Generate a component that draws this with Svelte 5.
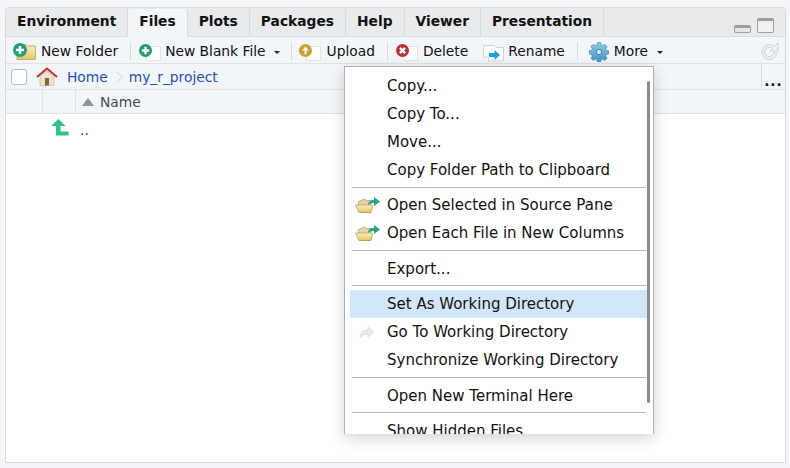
<script>
  const tabs = ["Environment", "Files", "Plots", "Packages", "Help", "Viewer", "Presentation"];

  // null = separator
  const menu = [
    { label: "Copy..." },
    { label: "Copy To..." },
    { label: "Move..." },
    { label: "Copy Folder Path to Clipboard" },
    null,
    { label: "Open Selected in Source Pane", icon: "open" },
    { label: "Open Each File in New Columns", icon: "open" },
    null,
    { label: "Export..." },
    null,
    { label: "Set As Working Directory", active: true },
    { label: "Go To Working Directory", icon: "goto" },
    { label: "Synchronize Working Directory" },
    null,
    { label: "Open New Terminal Here" },
    null,
    { label: "Show Hidden Files" },
  ];
</script>

{#snippet badge(color, kind)}
  <svg class="badge" width="13" height="13" viewBox="0 0 14 14">
    <circle cx="7" cy="7" r="7" fill={color} />
    {#if kind === "plus"}
      <path d="M7 3v8M3 7h8" stroke="#fff" stroke-width="2.600" />
    {:else if kind === "x"}
      <path d="M4.200 4.200l5.600 5.600M9.800 4.200l-5.600 5.600" stroke="#fff" stroke-width="2.400" />
    {:else}
      <path d="M7 2.800L3.500 7H6v4h2V7h2.500z" fill="#fff" />
    {/if}
  </svg>
{/snippet}

{#snippet openFolder()}
  <svg width="26" height="18" viewBox="0 0 26 18">
    <defs>
      <linearGradient id="fold" x1="0" y1="0" x2="0" y2="1">
        <stop offset="0" stop-color="#f8ecc0" />
        <stop offset="1" stop-color="#e5c766" />
      </linearGradient>
    </defs>
    <path d="M3 6l6-3 2 1.500h5V16.500H5z" fill="#e2d5a6" stroke="#a89a6a" stroke-width=".7" />
    <path d="M.5 9h16L18 10 15.500 16.500H4z" fill="url(#fold)" stroke="#b19b58" stroke-width=".7" />
    <path d="M13 9c0-3.500 2.500-5 6-5V1l6 4.500-6 4.500V7c-2.500 0-4.500.5-6 2z" fill="#22a77f" />
  </svg>
{/snippet}

<div class="page">
  <div class="pane">
    <div class="tabstrip">
      {#each tabs as tab}
        <div class="tab" class:selected={tab === "Files"}>{tab}</div>
      {/each}
      <div class="winbtns">
        <span class="minimize"></span>
        <span class="maximize"></span>
      </div>
    </div>

    <div class="toolbar">
      <div class="tool newfolder">
        <svg class="folder" width="24" height="18" viewBox="0 0 24 18">
          <defs>
            <linearGradient id="nf" x1="0" y1="0" x2="0" y2="1">
              <stop offset="0" stop-color="#fbf0c4" />
              <stop offset="1" stop-color="#e9c75f" />
            </linearGradient>
          </defs>
          <path d="M8 1.500h5l1.500 1.500h8V16.500H4V6z" fill="url(#nf)" stroke="#b9a15a" stroke-width=".8" />
          <circle cx="7" cy="7" r="7" fill="#1fa078" />
          <path d="M7 3v8M3 7h8" stroke="#fff" stroke-width="2.600" />
        </svg>
        New Folder
      </div>
      <i class="sep"></i>
      <div class="tool blank">
        <span class="stack"><span class="sheet"></span>{@render badge("#1f9d63", "plus")}</span>
        New Blank File
        <span class="caret"></span>
      </div>
      <i class="sep"></i>
      <div class="tool upload">
        <span class="stack"><span class="sheet"></span>{@render badge("#c9a227", "up")}</span>
        Upload
      </div>
      <i class="sep"></i>
      <div class="tool delete">
        <span class="stack"><span class="sheet"></span>{@render badge("#b8322f", "x")}</span>
        Delete
      </div>
      <div class="tool rename">
        <svg width="21" height="18" viewBox="0 0 21 18">
          <path d="M.5 1.500h11l1.500 2h7.500v13.500H5.500V13H.5z" fill="#fff" stroke="#c4c9d0" stroke-width=".8" />
          <path d="M6 9h5.500V6l5.500 5-5.500 5v-3H6z" fill="#1a9fe8" />
        </svg>
        Rename
      </div>
      <i class="sep"></i>
      <div class="tool more">
        <svg width="20" height="20" viewBox="0 0 20 20">
          <defs>
            <linearGradient id="gear" x1="0" y1="0" x2="0" y2="1">
              <stop offset="0" stop-color="#8fcbe6" />
              <stop offset="1" stop-color="#3f94c4" />
            </linearGradient>
          </defs>
          <path
            d="M8.400.5h3.200l.5 2.500 1.600.7 2.100-1.400 2.300 2.300-1.400 2.100.7 1.600 2.500.5v3.200l-2.500.5-.7 1.600 1.400 2.100-2.300 2.300-2.100-1.400-1.600.7-.5 2.500H8.400l-.5-2.500-1.600-.7-2.100 1.400-2.300-2.300 1.400-2.100-.7-1.600-2.500-.5V8.800l2.500-.5.7-1.600-1.400-2.100 2.300-2.300 2.100 1.400 1.600-.7z"
            fill="url(#gear)"
            stroke="#3a7ea6"
            stroke-width=".6"
          />
          <circle cx="10" cy="10" r="2.600" fill="#dcebf3" stroke="#3a7ea6" />
        </svg>
        More
        <span class="caret"></span>
      </div>
      <svg class="refresh" width="19" height="20" viewBox="0 0 19 20">
        <path
          d="M14.500 5.500A7.500 7.500 0 1 0 16.800 12h-3a4.700 4.700 0 1 1-1.300-4.500L10 10h8V2z"
          fill="#eef2f6"
          stroke="#c6d0dc"
        />
      </svg>
    </div>

    <div class="pathbar">
      <span class="checkbox"></span>
      <svg class="home" width="22" height="20" viewBox="0 0 22 20">
        <path d="M4 9.500v9h14v-9L11 3.500z" fill="#e9e3d6" stroke="#b9b3a6" stroke-width=".6" />
        <rect x="9" y="11" width="4" height="7.500" fill="#9a5a2a" />
        <path d="M1 10L11 1.500 21 10" fill="none" stroke="#c9302a" stroke-width="2" />
      </svg>
      <a class="crumb" href="#home">Home</a>
      <svg class="chevron" width="9" height="14" viewBox="0 0 9 14">
        <path d="M1 1.500L7.500 7 1 12.500" fill="none" stroke="#d5d8dc" />
      </svg>
      <a class="crumb" href="#project">my_r_project</a>
      <div class="overflow">...</div>
    </div>

    <div class="colhead">
      <div class="col c1"></div>
      <div class="col c2"></div>
      <div class="col c3"><span class="sort"></span>Name</div>
    </div>

    <div class="listing">
      <div class="row">
        <svg class="up" width="18" height="17" viewBox="0 0 18 17">
          <path d="M7.500 0L0 7h5v9.500h12.500v-4H9.500V7h5z" fill="#2fc483" />
        </svg>
        <a class="parent" href="#up">..</a>
      </div>
    </div>
  </div>

  <div class="menu">
    <div class="scrollthumb"></div>
    {#each menu as item}
      {#if item === null}
        <div class="divider"></div>
      {:else}
        <div class="item" class:active={item.active}>
          <span class="itemicon">
            {#if item.icon === "open"}
              {@render openFolder()}
            {:else if item.icon === "goto"}
              <svg class="goto" width="16" height="13" viewBox="0 0 16 13">
                <path d="M1 12c0-5 3-7.500 8-7.500V1l6 5-6 5V8C5.500 8 3 9 1 12z" fill="#e8ecf2" stroke="#cfd6e2" stroke-width=".7" />
              </svg>
            {/if}
          </span>
          {item.label}
        </div>
      {/if}
    {/each}
  </div>
</div>

<style>
  :global(body) {
    margin: 0;
    background: #f3f5f8;
  }

  .page {
    position: relative;
    width: 790px;
    height: 468px;
    overflow: hidden;
    padding: 7px 4px 5px 5px;
    box-sizing: border-box;
    font-family: "DejaVu Sans", sans-serif;
    font-size: 13.8px;
    color: #111;
  }

  .pane {
    height: 100%;
    box-sizing: border-box;
    display: flex;
    flex-direction: column;
    border: 1px solid #d6d9dd;
    border-radius: 4px 4px 0 0;
    background: #fff;
  }

  .tabstrip {
    display: flex;
    align-items: flex-end;
    height: 29px;
    flex: none;
    box-sizing: border-box;
    background: #e8eaec;
    border-bottom: 1px solid #d6d9dd;
    border-radius: 4px 4px 0 0;
  }

  .tab {
    height: 28px;
    box-sizing: border-box;
    padding: 4px 11px 0;
    font-weight: 700;
    line-height: 16px;
    color: #111;
    border-right: 1px solid #d6d9dd;
    margin-bottom: -1px;
    border-bottom: 1px solid #d6d9dd;
    white-space: nowrap;
  }

  .tab.selected {
    background: #f3f6f8;
    border-bottom-color: #f3f6f8;
    border-left: 1px solid #d6d9dd;
    margin-left: -1px;
    border-radius: 3px 3px 0 0;
  }

  .winbtns {
    margin-left: auto;
    display: flex;
    align-items: flex-end;
    gap: 6px;
    padding: 0 11px 3px 0;
  }

  .minimize {
    width: 17px;
    height: 8px;
    box-sizing: border-box;
    background: #e3e5e7;
    border: 1px solid #9b9fa4;
    border-top-width: 3px;
    border-radius: 2px;
  }

  .maximize {
    width: 17px;
    height: 15px;
    box-sizing: border-box;
    background: #eef0f2;
    border: 1px solid #9b9fa4;
    border-top-width: 3px;
    border-radius: 2px;
  }

  .toolbar {
    display: flex;
    align-items: center;
    height: 27px;
    flex: none;
    box-sizing: border-box;
    background: #f3f6f8;
    border-bottom: 1px solid #dfe2e5;
    padding: 2px 0 0 7px;
  }

  .tool {
    display: flex;
    align-items: center;
    white-space: nowrap;
  }

  .newfolder {
    gap: 4px;
    margin-right: 12px;
  }

  .newfolder svg {
    margin-top: 1px;
  }

  .blank {
    gap: 4px;
    margin: 0 11px 0 8px;
  }

  .upload {
    gap: 6px;
    margin: 0 12px 0 7px;
  }

  .delete {
    gap: 5px;
    margin-left: 8px;
  }

  .rename {
    gap: 4px;
    margin: 0 12px 0 15px;
  }

  .rename svg {
    margin-top: 3px;
  }

  .more {
    gap: 5px;
    margin-left: 11px;
  }

  .more svg {
    margin-top: 2px;
  }

  .stack {
    position: relative;
    width: 22px;
    height: 17px;
    margin-top: 3px;
    display: block;
  }

  .sheet {
    position: absolute;
    right: 0;
    bottom: 0;
    width: 15px;
    height: 15px;
    background: #fff;
    border: 1px solid #dfe2e6;
    box-sizing: border-box;
  }

  .badge {
    position: absolute;
    left: 0;
    top: 0;
  }

  .sep {
    width: 1px;
    height: 18px;
    background: #d6d9dd;
  }

  .caret {
    width: 0;
    height: 0;
    margin-left: 4px;
    margin-top: 3px;
    border-left: 3.500px solid transparent;
    border-right: 3.500px solid transparent;
    border-top: 3.500px solid #222;
  }

  .refresh {
    margin-left: auto;
    margin-right: 6px;
  }

  .pathbar {
    display: flex;
    align-items: center;
    height: 26px;
    flex: none;
    box-sizing: border-box;
    background: #f3f6f8;
    border-bottom: 1px solid #dfe2e5;
    padding-left: 5px;
  }

  .checkbox {
    width: 16px;
    height: 16px;
    box-sizing: border-box;
    background: #fff;
    border: 1px solid #b5b8bc;
    border-radius: 3px;
    margin-right: 9px;
  }

  .home {
    margin-right: 9px;
  }

  .crumb {
    color: #1c4fc4;
    text-decoration: none;
  }

  .chevron {
    margin: 0 5px 0 7px;
  }

  .overflow {
    margin-left: auto;
    width: 24px;
    height: 100%;
    box-sizing: border-box;
    border-left: 1px solid #d6d9dd;
    text-align: center;
    font-weight: 700;
    letter-spacing: 1px;
    line-height: 34px;
  }

  .colhead {
    display: flex;
    height: 24px;
    flex: none;
    box-sizing: border-box;
    background: #f3f6f8;
    border-bottom: 1px solid #dfe2e5;
    color: #444b55;
  }

  .col {
    box-sizing: border-box;
    border-right: 1px solid #dfe2e5;
    display: flex;
    align-items: center;
  }

  .c1 {
    width: 37px;
  }

  .c2 {
    width: 33px;
  }

  .c3 {
    border-right: none;
    padding-left: 6px;
    gap: 6px;
  }

  .sort {
    width: 0;
    height: 0;
    border-left: 6px solid transparent;
    border-right: 6px solid transparent;
    border-bottom: 8px solid #8a8f9a;
  }

  .listing {
    flex: 1;
  }

  .row {
    display: flex;
    align-items: center;
    height: 27px;
    padding-left: 45px;
    gap: 11px;
  }

  .parent {
    color: #1a3fa8;
    text-decoration: none;
    line-height: 14px;
    padding-top: 5px;
  }

  .menu {
    position: absolute;
    left: 344px;
    top: 66px;
    width: 310px;
    height: 368px;
    box-sizing: border-box;
    overflow: hidden;
    padding: 5px 6px 0 5px;
    background: #fff;
    border: 1px solid #a9adb8;
    border-bottom: none;
    box-shadow: 0 4px 14px rgba(0, 0, 0, 0.18);
  }

  .scrollthumb {
    position: absolute;
    right: 3px;
    top: 14px;
    width: 3px;
    height: 322px;
    background: #8a8a8a;
    border-radius: 2px;
  }

  .item {
    display: flex;
    align-items: center;
    height: 28px;
    white-space: nowrap;
    font-size: 15px;
  }

  .item.active {
    background: #d3e6f7;
  }

  .itemicon {
    width: 37px;
    box-sizing: border-box;
    padding-left: 5px;
    display: flex;
    flex: none;
  }

  .goto {
    margin-left: 4px;
  }

  .divider {
    height: 1px;
    background: #b8b8b8;
    margin: 2.600px 1px 3.800px 2px;
  }
</style>
